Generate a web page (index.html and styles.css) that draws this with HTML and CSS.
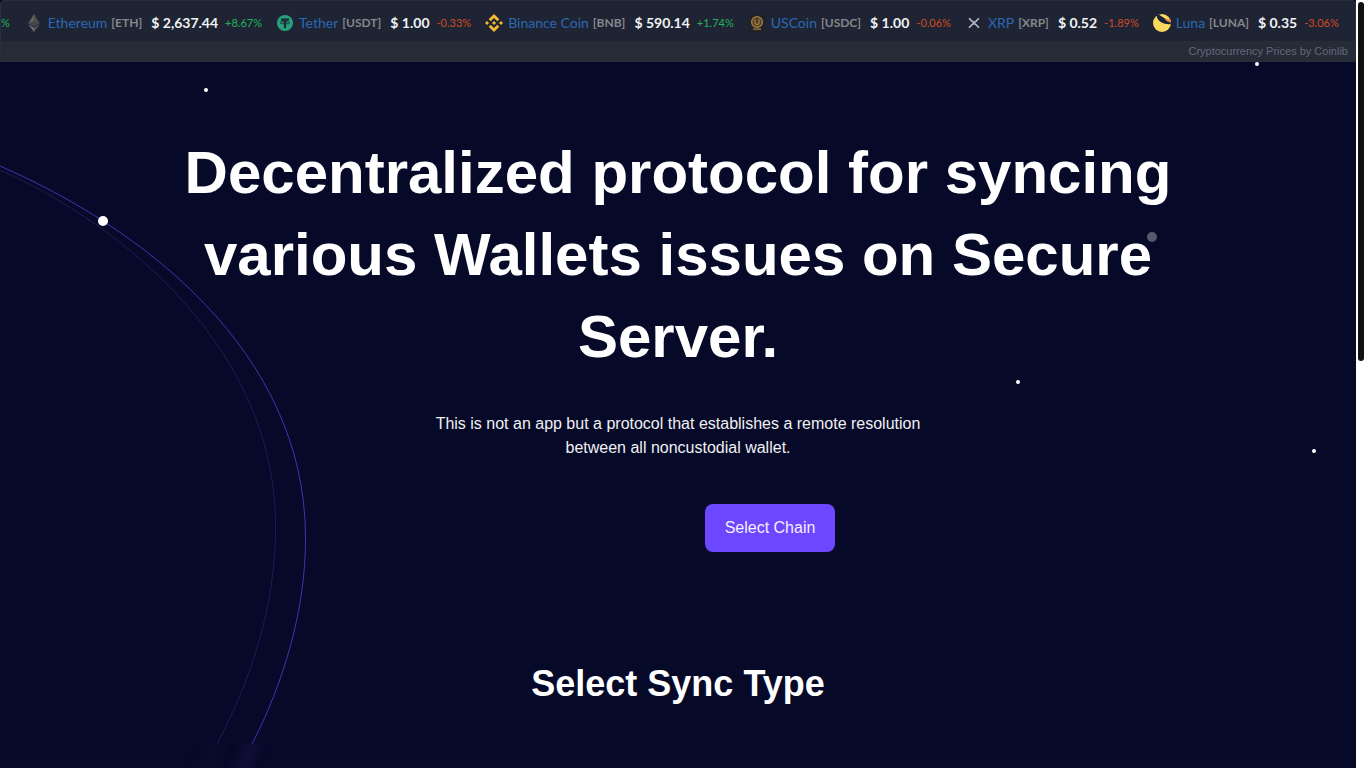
FILE: index.html
```html
<!DOCTYPE html>
<html lang="en">
<head>
    <meta charset="UTF-8">
    <meta name="viewport" content="width=device-width, initial-scale=1.0">
    <title>Decentralized protocol</title>
    <link rel="stylesheet" href="styles.css">
</head>
<body>

<div class="page">
    <header class="ticker">
        <div class="ticker-track">
            <span class="change up">%</span>
            <div class="coin">
                <svg class="coin-icon" viewBox="0 0 18 18">
                    <path d="M9 0 3.2 9.4 9 12.6z" fill="#626262"/>
                    <path d="M9 0l5.800 9.400L9 12.600z" fill="#505050"/>
                    <path d="M3.200 10.500 9 18v-4.200z" fill="#707070"/>
                    <path d="M14.800 10.500 9 18v-4.200z" fill="#585858"/>
                    <path d="M3.200 9.400 9 6.900l5.800 2.500L9 12.600z" fill="#454545"/>
                </svg>
                <a href="#">Ethereum</a>
                <span class="symbol">[ETH]</span>
                <b class="price">$ 2,637.44</b>
                <span class="change up">+8.67%</span>
            </div>
            <div class="coin">
                <svg class="coin-icon" viewBox="0 0 18 18">
                    <circle cx="9" cy="9" r="8" fill="#26a17b"/>
                    <path d="M5 4.500h8v2.200h-2.900V14H7.900V6.700H5z" fill="#1e2735"/>
                    <ellipse cx="9" cy="8.700" rx="5" ry="1.200" fill="none" stroke="#1e2735" stroke-width=".8"/>
                </svg>
                <a href="#">Tether</a>
                <span class="symbol">[USDT]</span>
                <b class="price">$ 1.00</b>
                <span class="change down">-0.33%</span>
            </div>
            <div class="coin">
                <svg class="coin-icon" viewBox="0 0 18 18" fill="#f3ba2f">
                    <path d="M9 0l5.300 5.300-2 2L9 4 5.700 7.300l-2-2z"/>
                    <path d="M9 18l5.300-5.300-2-2L9 14l-3.300-3.300-2 2z"/>
                    <path d="M2 7l2 2-2 2-2-2zM16 7l2 2-2 2-2-2zM9 7l2 2-2 2-2-2z"/>
                </svg>
                <a href="#">Binance Coin</a>
                <span class="symbol">[BNB]</span>
                <b class="price">$ 590.14</b>
                <span class="change up">+1.74%</span>
            </div>
            <div class="coin">
                <svg class="coin-icon" viewBox="0 0 18 18" fill="none" stroke="#a47d3c">
                    <path d="M0 0h18v18H0z" fill="#20222b" stroke="none"/>
                    <circle cx="9" cy="8" r="5.300" fill="#4a3d2a" stroke-width="1.500"/>
                    <path d="M7 5.200v3.300a2 2 0 0 0 4 0V5.200" stroke-width="1.300"/>
                    <path d="M5 15.200h8" stroke-width="1.200"/>
                </svg>
                <a href="#">USCoin</a>
                <span class="symbol">[USDC]</span>
                <b class="price">$ 1.00</b>
                <span class="change down">-0.06%</span>
            </div>
            <div class="coin">
                <svg class="coin-icon" viewBox="0 0 18 18" fill="none" stroke="#b9bcc0" stroke-width="1.600">
                    <path d="M4 4.200l3.200 3.200q1.800 1.600 3.600 0L14 4.200"/>
                    <path d="M4 13.800l3.200-3.300q1.800-1.600 3.600 0l3.200 3.300"/>
                </svg>
                <a href="#">XRP</a>
                <span class="symbol">[XRP]</span>
                <b class="price">$ 0.52</b>
                <span class="change down">-1.89%</span>
            </div>
            <div class="coin">
                <svg class="coin-icon" viewBox="0 0 18 18">
                    <circle cx="9" cy="9" r="9" fill="#f9d85e"/>
                    <path d="M3.800 1.600C3.500 6 9 10.800 17.900 10.200L18 8.500C14 6.500 10 2.800 5.600.600z" fill="#152238"/>
                    <path d="M18 8.600c-2.500-.3-4.700-1.600-6.500-3.400l5 .2q1.200 1.500 1.500 3.200z" fill="#e8823a"/>
                </svg>
                <a href="#">Luna</a>
                <span class="symbol">[LUNA]</span>
                <b class="price">$ 0.35</b>
                <span class="change down">-3.06%</span>
            </div>
        </div>
        <div class="ticker-credit"><a href="#">Cryptocurrency Prices by Coinlib</a></div>
    </header>

    <main>
        <svg class="orbit" width="320" height="706" viewBox="0 62 320 706" fill="none">
            <defs>
                <filter id="soft" filterUnits="userSpaceOnUse" x="150" y="700" width="160" height="120" color-interpolation-filters="sRGB">
                    <feGaussianBlur stdDeviation="5"/>
                </filter>
                <clipPath id="below">
                    <path d="M0 744h320v24H0z"/>
                </clipPath>
            </defs>
            <path d="M0 170C125 226 275 350 275.500 525C276 605 252 677 217 744" stroke="#211a58"/>
            <path d="M0 166C140 227 305 350 305.500 537C306 610 283 684 252 744" stroke="#4b2fae"/>
            <g clip-path="url(#below)">
                <path d="M219 736L199 784" stroke="#0a0c2c" stroke-width="14" filter="url(#soft)"/>
                <path d="M256 736L236 784" stroke="#140d38" stroke-width="14" filter="url(#soft)"/>
            </g>
        </svg>
        <span class="star star-1"></span>
        <span class="star star-2"></span>
        <span class="star star-3"></span>
        <span class="star star-4"></span>
        <span class="star big star-5"></span>
        <span class="star big dim star-6"></span>

        <section class="hero">
            <h1>Decentralized protocol for syncing various Wallets issues on Secure Server.</h1>
            <p>This is not an app but a protocol that establishes a remote resolution between all noncustodial wallet.</p>
            <div class="hero-action">
                <button type="button">Select Chain</button>
            </div>
        </section>

        <section class="sync">
            <h2>Select Sync Type</h2>
        </section>
    </main>
</div>

<div class="scrollbar"><div class="thumb"></div></div>

</body>
</html>
```
FILE: styles.css
```css
* {
    box-sizing: border-box;
}

body {
    margin: 0;
    display: flex;
    min-height: 100vh;
    background: #060927;
    color: #fff;
    font-family: "Liberation Sans", Arial, sans-serif;
    font-size: 16px;
    line-height: 24px;
}

a {
    text-decoration: none;
}

.page {
    flex: 1;
    min-width: 0;
}

/* price ticker */
.ticker {
    height: 62px;
    background: #262b38;
    border: 1px solid #282e3b;
    border-radius: 4px 4px 0 0;
    overflow: hidden;
}

.ticker-track {
    display: flex;
    align-items: center;
    gap: 14px;
    height: 40px;
    padding-top: 4px;
    background: #1e2433;
    font-family: Lato, "Open Sans", sans-serif;
    white-space: nowrap;
    overflow: hidden;
}

.coin {
    display: flex;
    align-items: center;
    flex: none;
}

.coin-icon {
    width: 18px;
    height: 18px;
    margin-right: 5px;
}

.coin a {
    color: #2c68b3;
    font-size: 14px;
}

.symbol {
    margin-left: 4px;
    color: #85878b;
    font-size: 12px;
    font-weight: bold;
}

.price {
    margin-left: 9px;
    color: #f0f2f4;
    font-size: 14px;
}

.change {
    margin-left: 7px;
    font-size: 11px;
}

.ticker-track > .change {
    margin-left: 0;
    padding-right: 1px;
}

.up {
    color: #21b35b;
}

.down {
    color: #d14a24;
}

.ticker-credit {
    padding-right: 7px;
    text-align: right;
    font-size: 11px;
    line-height: 20px;
}

.ticker-credit a {
    color: #626878;
}

/* background decoration */
main {
    position: relative;
}

.orbit {
    position: absolute;
    top: 0;
    left: 0;
}

.star {
    position: absolute;
    width: 4px;
    height: 4px;
    border-radius: 50%;
    background: #fff;
}

.star.big {
    width: 10px;
    height: 10px;
}

.star.dim {
    background: #56586e;
}

.star-1 { left: 204px; top: 26px; }
.star-2 { right: 97px; top: 0; }
.star-3 { right: 336px; top: 318px; }
.star-4 { right: 40px; top: 387px; }
.star-5 { left: 98px; top: 154px; }
.star-6 { right: 199px; top: 170px; }

/* hero */
.hero {
    position: relative;
    max-width: 1060px;
    margin: 0 auto;
    padding-top: 70px;
    text-align: center;
}

h1 {
    margin: 0;
    font-size: 60px;
    line-height: 82px;
}

.hero p {
    max-width: 500px;
    margin: 34px auto 0;
    color: #f0f0f4;
}

.hero-action {
    display: flex;
    justify-content: center;
    margin-top: 44px;
    padding-left: 184px;
}

button {
    height: 48px;
    padding: 0 20px;
    border: none;
    border-radius: 8px;
    background: #6c47ff;
    color: #f4f0ff;
    font-family: inherit;
    font-size: 16px;
    cursor: pointer;
}

.sync {
    padding-top: 104px;
    text-align: center;
}

h2 {
    margin: 0;
    font-size: 36px;
    line-height: 56px;
}

/* scrollbar */
.scrollbar {
    width: 10px;
    padding: 2px;
    background: #fff;
}

.thumb {
    height: 359px;
    border-radius: 3px;
    background: #111;
}
```
